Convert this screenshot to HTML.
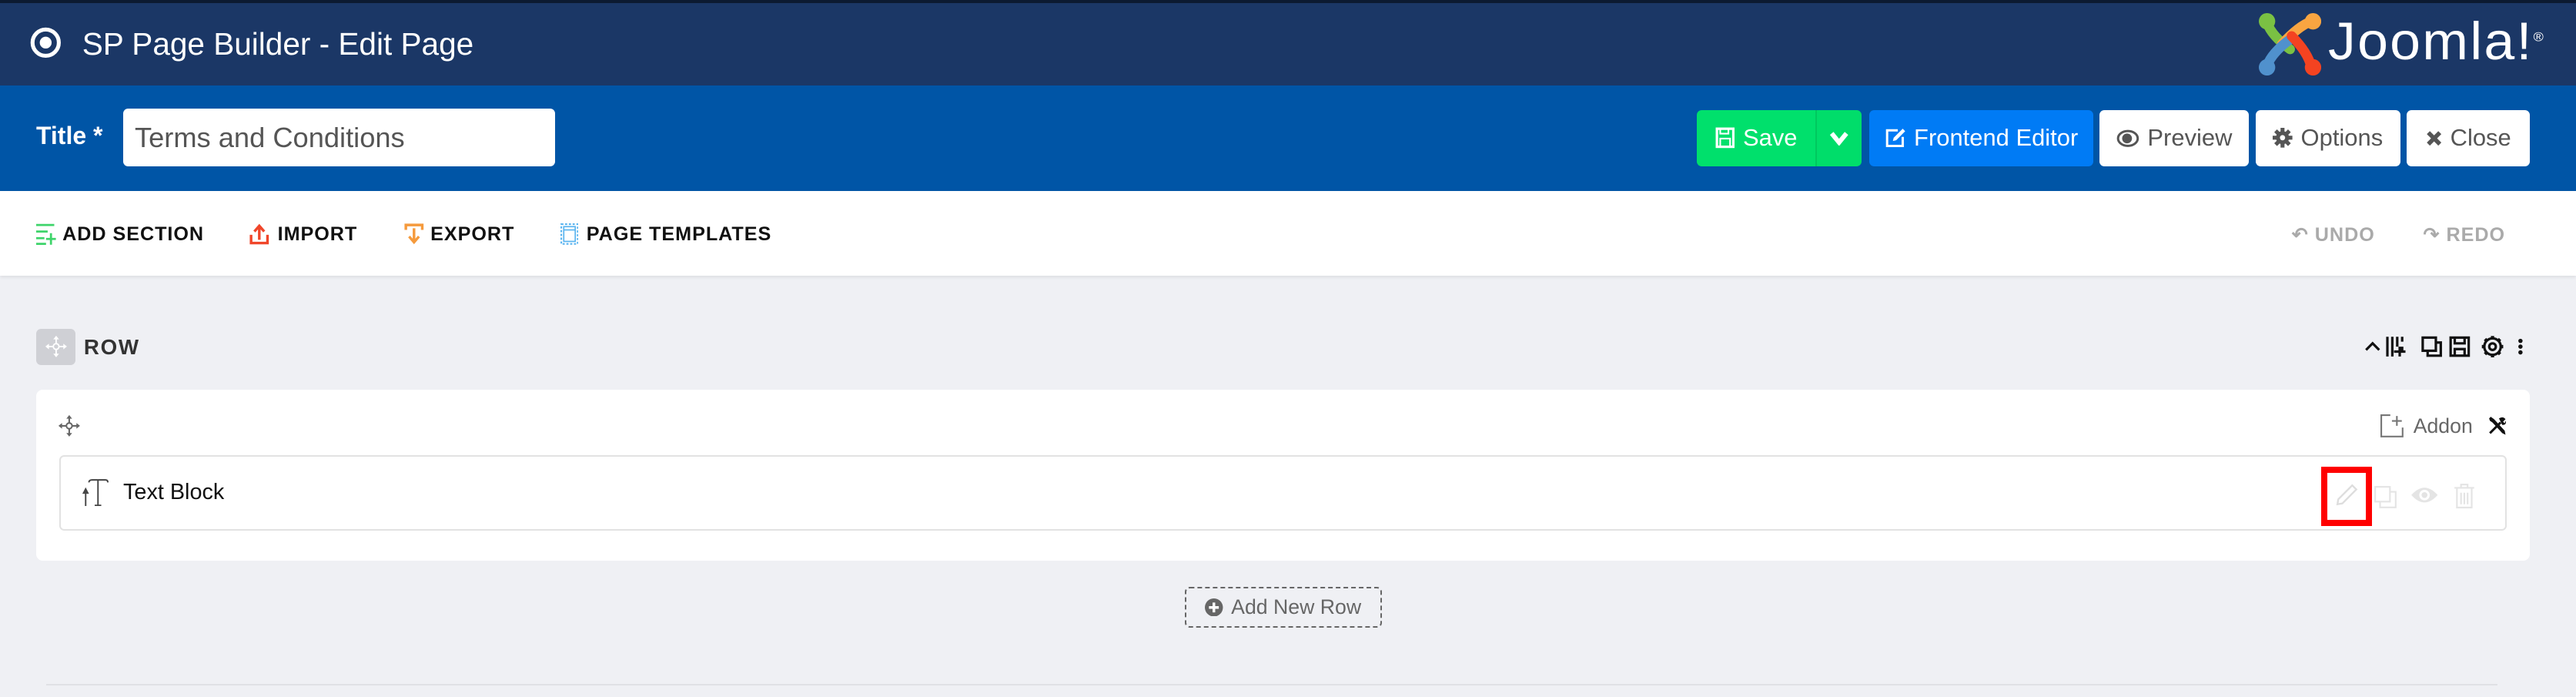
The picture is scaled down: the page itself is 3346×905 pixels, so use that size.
<!DOCTYPE html>
<html><head><meta charset="utf-8"><style>
html{zoom:2.1339}
*{box-sizing:border-box;margin:0;padding:0}
body{width:1568px;height:424px;overflow:hidden;background:#eff0f4;font-family:"Liberation Sans",sans-serif;position:relative}
.a{position:absolute}
.hdr{left:0;top:0;width:1568px;height:52px;background:#1b3766;border-top:2px solid #0c1a31}
.bar{left:0;top:52px;width:1568px;height:64px;background:#0055a6}
.tb{left:0;top:116px;width:1568px;height:52px;background:#fff;box-shadow:0 1px 2px rgba(0,0,0,.08)}
.btn{top:67px;height:34px;border-radius:3px;font-size:14.5px;display:flex;align-items:center;justify-content:center;gap:5px}
.w{background:#fff;color:#555}
.ti{font-size:11.8px;font-weight:bold;letter-spacing:.45px;color:#111;top:136px}
.gr{color:#aaa}
</style></head><body>
<div class="a hdr"></div>
<svg class="a" style="left:18px;top:16px" width="20" height="20" viewBox="0 0 20 20"><circle cx="10" cy="10" r="8" fill="none" stroke="#fff" stroke-width="2.4"/><circle cx="10" cy="10" r="3.6" fill="#fff"/></svg>
<div class="a" style="left:50px;top:16px;font-size:19px;color:#fff">SP Page Builder - Edit Page</div>
<svg class="a" style="left:1375px;top:8px" width="38" height="38" viewBox="0 0 38 38">
<g stroke-linecap="round" stroke-width="6" fill="none">
<path d="M5 6 Q8 14 19 22" stroke="#7ac143"/><path d="M32 5 Q24 8 14 19" stroke="#f9a541"/>
<path d="M5 32 Q8 24 19 16" stroke="#5091cd"/><path d="M32 33 Q30 24 20 14" stroke="#f44321"/></g>
<circle cx="5" cy="5" r="5" fill="#7ac143"/><circle cx="33" cy="5" r="5" fill="#f9a541"/><circle cx="5" cy="33" r="5" fill="#5091cd"/><circle cx="33" cy="33" r="5" fill="#f44321"/></svg>
<div class="a" style="left:1417px;top:7px;font-size:32px;color:#fff;letter-spacing:1px;transform:scaleX(1.05);transform-origin:left;font-weight:normal;-webkit-text-stroke:0">Joomla!<sup style="font-size:8px">®</sup></div>

<div class="a bar"></div>
<div class="a" style="left:22px;top:74px;font-size:15px;font-weight:bold;color:#fff">Title *</div>
<div class="a" style="left:75px;top:66px;width:263px;height:35px;background:#fff;border-radius:3px;font-size:17px;color:#555;padding:8px 7px">Terms and Conditions</div>
<div class="a btn" style="left:1033px;width:72px;background:#00e06c;color:#fff;border-radius:3px 0 0 3px">
<svg width="12" height="13" viewBox="0 0 12 13"><rect x="1" y="1" width="10" height="11" fill="none" stroke="#fff" stroke-width="1.5"/><rect x="3" y="1" width="5" height="3" fill="none" stroke="#fff"/><rect x="3" y="7" width="6" height="5" fill="none" stroke="#fff"/></svg>Save</div>
<div class="a btn" style="left:1105px;width:28px;background:#00dd6a;color:#fff;border-left:1px solid #00c85e;border-radius:0 3px 3px 0"><svg width="12" height="9" viewBox="0 0 12 9"><path d="M1.5 1.5 L6 7 L10.5 1.5" fill="none" stroke="#fff" stroke-width="2.8"/></svg></div>
<div class="a btn" style="left:1138px;width:136px;background:#007bf5;color:#fff">
<svg width="13" height="13" viewBox="0 0 13 13"><path d="M8 2H1.5V11.5H11V6" fill="none" stroke="#fff" stroke-width="1.4"/><path d="M5 8.5 L5.5 6.5 L11 1 L12.5 2.5 L7 8Z" fill="#fff"/></svg>Frontend Editor</div>
<div class="a btn w" style="left:1278px;width:91px"><svg width="14" height="11" viewBox="0 0 14 11"><ellipse cx="7" cy="5.5" rx="6" ry="4.5" fill="none" stroke="#555" stroke-width="1.4"/><circle cx="6.5" cy="5.5" r="3" fill="#555"/></svg>Preview</div>
<div class="a btn w" style="left:1373px;width:88px"><svg width="12" height="12" viewBox="0 0 12 12"><circle cx="6" cy="6" r="4" fill="#555"/><g stroke="#555" stroke-width="2.4"><path d="M6 0V12M0 6H12M1.8 1.8L10.2 10.2M10.2 1.8L1.8 10.2"/></g><circle cx="6" cy="6" r="1.6" fill="#fff"/></svg>Options</div>
<div class="a btn w" style="left:1465px;width:75px"><svg width="10" height="10" viewBox="0 0 10 10"><path d="M1.5 1.5L8.5 8.5M8.5 1.5L1.5 8.5" stroke="#555" stroke-width="2.6"/></svg>Close</div>

<div class="a tb"></div>
<svg class="a" style="left:22px;top:136px" width="12" height="13" viewBox="0 0 12 13"><g stroke="#3ed46a" stroke-width="1.3"><path d="M0 1H11M0 5H7M0 9H5M0 12.5H6M9 6V13M6 9.5H12"/></g></svg>
<div class="a ti" style="left:38px">ADD SECTION</div>
<svg class="a" style="left:152px;top:136px" width="12" height="13" viewBox="0 0 12 13"><path d="M1 7V12H11V7" fill="none" stroke="#f0462a" stroke-width="1.6"/><path d="M6 10V2M3 5L6 1.5L9 5" fill="none" stroke="#f0462a" stroke-width="1.6"/></svg>
<div class="a ti" style="left:169px">IMPORT</div>
<svg class="a" style="left:246px;top:136px" width="12" height="13" viewBox="0 0 12 13"><path d="M1 4V1H11V4" fill="none" stroke="#f59a3c" stroke-width="1.6"/><path d="M6 3V11M3 8L6 11.5L9 8" fill="none" stroke="#f59a3c" stroke-width="1.6"/></svg>
<div class="a ti" style="left:262px">EXPORT</div>
<svg class="a" style="left:341px;top:136px" width="11" height="13" viewBox="0 0 11 13"><rect x=".5" y=".5" width="10" height="12" fill="none" stroke="#5ab4ef" stroke-dasharray="1.3 1"/><rect x="2" y="2" width="7" height="9" fill="none" stroke="#5ab4ef" stroke-width=".8"/><path d="M2 4H9" stroke="#5ab4ef" stroke-width=".8"/></svg>
<div class="a ti" style="left:357px">PAGE TEMPLATES</div>
<div class="a ti gr" style="left:1395px">↶ UNDO</div>
<div class="a ti gr" style="left:1475px">↷ REDO</div>

<div class="a" style="left:22px;top:200px;width:24px;height:22px;background:#cfd0d5;border-radius:3px"></div>
<svg class="a" style="left:27px;top:204px" width="14" height="14" viewBox="0 0 16 16"><g stroke="#fff" stroke-width="1" fill="none"><circle cx="8" cy="8" r="2"/><path d="M8 2V6M8 10V14M2 8H6M10 8H14"/></g><g fill="#fff"><path d="M8 0.5L6 3H10Z M8 15.5L6 13H10Z M0.5 8L3 6V10Z M15.5 8L13 6V10Z"/></g></svg>
<div class="a" style="left:51px;top:204px;font-size:13px;font-weight:bold;letter-spacing:.8px;color:#333">ROW</div>
<svg class="a" style="left:1438px;top:203px" width="102" height="16" viewBox="0 0 102 16">
<g fill="none" stroke="#111" stroke-width="1.5">
<path d="M2 10L6 6L10 10"/><path d="M15 2V14M18 2V14M21 2V8M24 2V5M24 8V11M19 11H26M22.5 8V14"/>
<rect x="36.5" y="2.5" width="8" height="8"/><path d="M44.5 5.5H47.5V13.5H39.5V10.5"/>
<rect x="53.5" y="2.5" width="11" height="11"/><path d="M56 2.5V6H62V2.5M56 13.5V9.5H62V13.5"/>
<circle cx="79" cy="8" r="2"/><circle cx="79" cy="8" r="5"/></g>
<g stroke="#111" stroke-width="2"><path d="M79 1.5V3.5M79 12.5V14.5M72.5 8H74.5M83.5 8H85.5M74.4 3.4L75.8 4.8M82.2 11.2L83.6 12.6M74.4 12.6L75.8 11.2M82.2 4.8L83.6 3.4"/></g>
<g fill="#111"><circle cx="96" cy="4.5" r="1.3"/><circle cx="96" cy="8" r="1.3"/><circle cx="96" cy="11.5" r="1.3"/></g></svg>

<div class="a" style="left:22px;top:237px;width:1518px;height:104px;background:#fff;border-radius:4px"></div>
<svg class="a" style="left:35px;top:252px" width="14" height="14" viewBox="0 0 16 16"><g stroke="#666" stroke-width="1.1" fill="none"><circle cx="8" cy="8" r="2"/><path d="M8 2V6M8 10V14M2 8H6M10 8H14"/></g><g fill="#666"><path d="M8 0.5L6 3H10Z M8 15.5L6 13H10Z M0.5 8L3 6V10Z M15.5 8L13 6V10Z"/></g></svg>
<svg class="a" style="left:1449px;top:252px" width="14" height="14" viewBox="0 0 14 14"><path d="M6 0.5H0.5V13.5H13.5V8" fill="none" stroke="#777"/><path d="M10 1V7M7 4H13" stroke="#777"/></svg>
<div class="a" style="left:1469px;top:252px;font-size:12.5px;color:#666">Addon</div>
<svg class="a" style="left:1514px;top:253px" width="12" height="12" viewBox="0 0 12 12"><path d="M1.5 10.5L8 4" stroke="#111" stroke-width="1.4"/><path d="M7 1.5Q9.5 0 11 2L9.5 3.5L10.5 4.5L11 3Q12 5.5 9 5.5Z" fill="#111"/><path d="M1 1.5L2 0.5L4 2L10.5 9L11 11.5L9 10.5L3 4L1.5 3Z" fill="#111"/></svg>

<div class="a" style="left:36px;top:277px;width:1490px;height:46px;border:1px solid #e2e2e2;border-radius:3px;background:#fff"></div>
<svg class="a" style="left:50px;top:291px" width="16" height="17" viewBox="0 0 16 17"><path d="M4 2.5Q4 1 6 1H14Q15.5 1 15.5 2.5M9.5 1V16.5M7.5 16.5H11.5M2 17V7M0.7 9L2 6.5L3.3 9Z" fill="none" stroke="#444" stroke-width=".9"/></svg>
<div class="a" style="left:75px;top:292px;font-size:13.5px;color:#111">Text Block</div>
<div class="a" style="left:1413px;top:284px;width:31px;height:36px;border:4px solid #f00"></div>
<svg class="a" style="left:1422px;top:294px" width="14" height="14" viewBox="0 0 14 14"><path d="M1 13L1.5 10L10 1.5L12.5 4L4 12.5Z" fill="none" stroke="#ddd" stroke-width="1.1"/></svg>
<svg class="a" style="left:1445px;top:295px" width="15" height="15" viewBox="0 0 15 15"><rect x="1" y="1" width="9" height="9" fill="none" stroke="#e4e4e4"/><path d="M10 4H13.5V13.5H4V10" fill="none" stroke="#e4e4e4"/></svg>
<svg class="a" style="left:1467px;top:295px" width="18" height="12" viewBox="0 0 18 12"><path d="M1 6Q9 -3 17 6Q9 15 1 6Z" fill="#e4e4e4"/><circle cx="9" cy="6" r="3.2" fill="#fff"/><circle cx="9" cy="6" r="1.8" fill="#e4e4e4"/></svg>
<svg class="a" style="left:1493px;top:294px" width="14" height="16" viewBox="0 0 14 16"><path d="M1 3H13M5 3V1H9V3M2.5 3.5V15H11.5V3.5M5 6V13M7 6V13M9 6V13" fill="none" stroke="#e4e4e4"/></svg>

<div class="a" style="left:721px;top:357px;width:120px;height:25px;border:1px dashed #666;border-radius:3px;font-size:12.5px;color:#666;display:flex;align-items:center;justify-content:center;gap:5px">
<svg width="11" height="11" viewBox="0 0 11 11"><circle cx="5.5" cy="5.5" r="5.5" fill="#666"/><path d="M5.5 2.5V8.5M2.5 5.5H8.5" stroke="#fff" stroke-width="1.6"/></svg>Add New Row</div>
<div class="a" style="left:28px;top:416px;width:1492px;height:1px;background:#e0e1e5"></div>
</body></html>
